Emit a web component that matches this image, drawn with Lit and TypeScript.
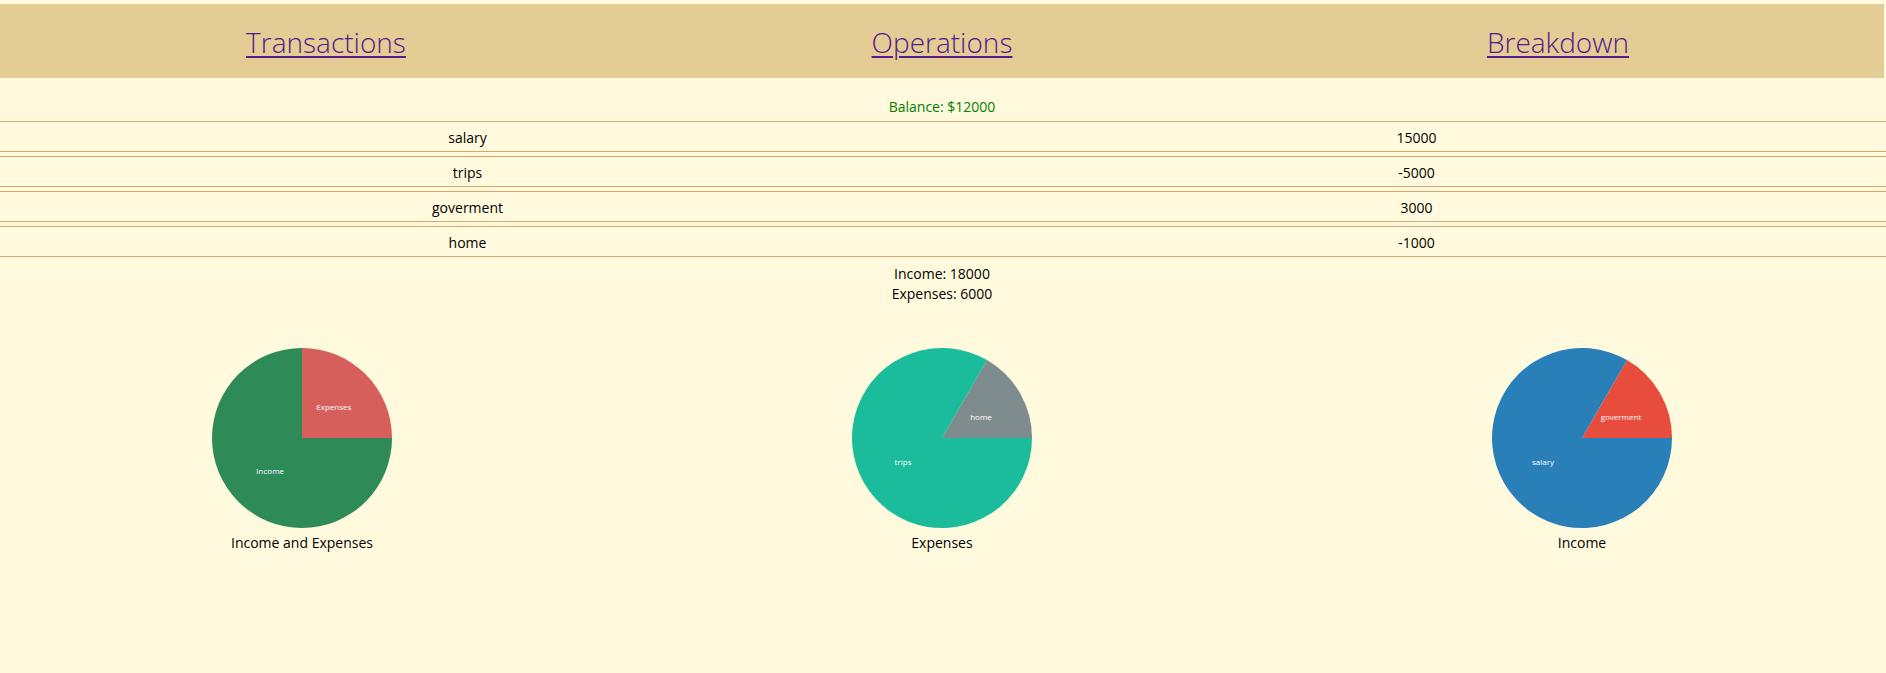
import { LitElement, html, svg, css } from "lit";
import { customElement, property, state } from "lit/decorators.js";

interface Slice {
  label: string;
  value: number;
  color: string;
}

interface Transaction {
  name: string;
  amount: number;
}

const RADIUS = 90;

@customElement("pie-chart")
class PieChart extends LitElement {
  @property({ attribute: false }) slices: Slice[] = [];
  @property() caption = "";

  static styles = css`
    :host {
      display: block;
      width: 300px;
    }
    .figure {
      margin: 0;
      display: flex;
      flex-direction: column;
      align-items: center;
      gap: 5px;
    }
    .pie {
      display: block;
      width: 180px;
      height: 180px;
    }
    .label {
      font-size: 8px;
      font-weight: 500;
      fill: #fff;
      text-anchor: middle;
    }
    .caption {
      line-height: 20px;
    }
  `;

  private renderSlices() {
    const total = this.slices.reduce((sum, s) => sum + s.value, 0);
    let start = 0;
    return this.slices.map((slice) => {
      const sweep = (slice.value / total) * Math.PI * 2;
      const end = start + sweep;
      // Angles run counter-clockwise from three o'clock.
      const x1 = RADIUS * Math.cos(start);
      const y1 = -RADIUS * Math.sin(start);
      const x2 = RADIUS * Math.cos(end);
      const y2 = -RADIUS * Math.sin(end);
      const mid = start + sweep / 2;
      const large = sweep > Math.PI ? 1 : 0;
      start = end;
      return svg`
        <path fill=${slice.color}
          d="M0 0L${x1} ${y1}A${RADIUS} ${RADIUS} 0 ${large} 0 ${x2} ${y2}Z"></path>
        <text class="label" dy="4"
          x=${(RADIUS / 2) * Math.cos(mid)}
          y=${(-RADIUS / 2) * Math.sin(mid)}>${slice.label}</text>`;
    });
  }

  render() {
    return html`
      <figure class="figure">
        <svg class="pie" viewBox="-90 -90 180 180">${this.renderSlices()}</svg>
        <figcaption class="caption">${this.caption}</figcaption>
      </figure>
    `;
  }
}

@customElement("app-root")
class AppRoot extends LitElement {
  @state() private transactions: Transaction[] = [
    { name: "salary", amount: 15000 },
    { name: "trips", amount: -5000 },
    { name: "goverment", amount: 3000 },
    { name: "home", amount: -1000 },
  ];

  static styles = css`
    :host {
      display: flow-root;
      box-sizing: border-box;
      min-height: 100vh;
      background: #fffadd;
      color: #000;
      font-family: "Segoe UI", "Open Sans", "Noto Sans", sans-serif;
      font-size: 14px;
      line-height: 20px;
      text-align: center;
    }
    .nav {
      display: grid;
      grid-template-columns: repeat(3, 1fr);
      margin: 4px 2px 0 0;
      padding: 18px 18px 16px;
      background: #e4cc95;
      font-size: 28px;
      font-weight: 300;
      line-height: 40px;
    }
    .link {
      color: #551a8b;
      text-decoration-thickness: 2px;
      text-underline-offset: 3px;
    }
    .balance {
      margin: 19px 2px 0 0;
      color: green;
    }
    .table {
      width: 100%;
      table-layout: fixed;
      border-spacing: 0 4px;
    }
    .cell {
      height: 27px;
      padding: 2px 0 0;
      border: solid #dca56a;
      border-width: 1px 0;
    }
    .name {
      padding-right: 8px;
    }
    .amount {
      padding-left: 4px;
    }
    .totals {
      margin: 3px 2px 0 0;
    }
    .total {
      margin: 0;
    }
    .charts {
      display: flex;
      justify-content: space-between;
      margin: 44px 2px 0 0;
      padding: 0 152px;
    }
  `;

  render() {
    const income = this.transactions.filter((t) => t.amount > 0);
    const expenses = this.transactions.filter((t) => t.amount < 0);
    const incomeTotal = income.reduce((sum, t) => sum + t.amount, 0);
    const expenseTotal = -expenses.reduce((sum, t) => sum + t.amount, 0);
    const incomeColors: Record<string, string> = { salary: "#2980b9", goverment: "#e74c3c" };
    const expenseColors: Record<string, string> = { trips: "#1abc9c", home: "#7f8c8d" };
    const toSlices = (list: Transaction[], colors: Record<string, string>): Slice[] =>
      [...list].reverse().map((t) => ({
        label: t.name,
        value: Math.abs(t.amount),
        color: colors[t.name],
      }));

    return html`
      <nav class="nav">
        <div><a class="link" href="#transactions">Transactions</a></div>
        <div><a class="link" href="#operations">Operations</a></div>
        <div><a class="link" href="#breakdown">Breakdown</a></div>
      </nav>
      <main>
        <p class="balance">Balance: $${incomeTotal - expenseTotal}</p>
        <table class="table">
          <tbody>
            ${this.transactions.map(
              (t) => html`<tr>
                <td class="cell name">${t.name}</td>
                <td class="cell amount">${t.amount}</td>
              </tr>`
            )}
          </tbody>
        </table>
        <div class="totals">
          <p class="total">Income: ${incomeTotal}</p>
          <p class="total">Expenses: ${expenseTotal}</p>
        </div>
        <div class="charts">
          <pie-chart
            caption="Income and Expenses"
            .slices=${[
              { label: "Expenses", value: expenseTotal, color: "#d65f5c" },
              { label: "Income", value: incomeTotal, color: "#2e8b57" },
            ]}
          ></pie-chart>
          <pie-chart caption="Expenses" .slices=${toSlices(expenses, expenseColors)}></pie-chart>
          <pie-chart caption="Income" .slices=${toSlices(income, incomeColors)}></pie-chart>
        </div>
      </main>
    `;
  }
}
